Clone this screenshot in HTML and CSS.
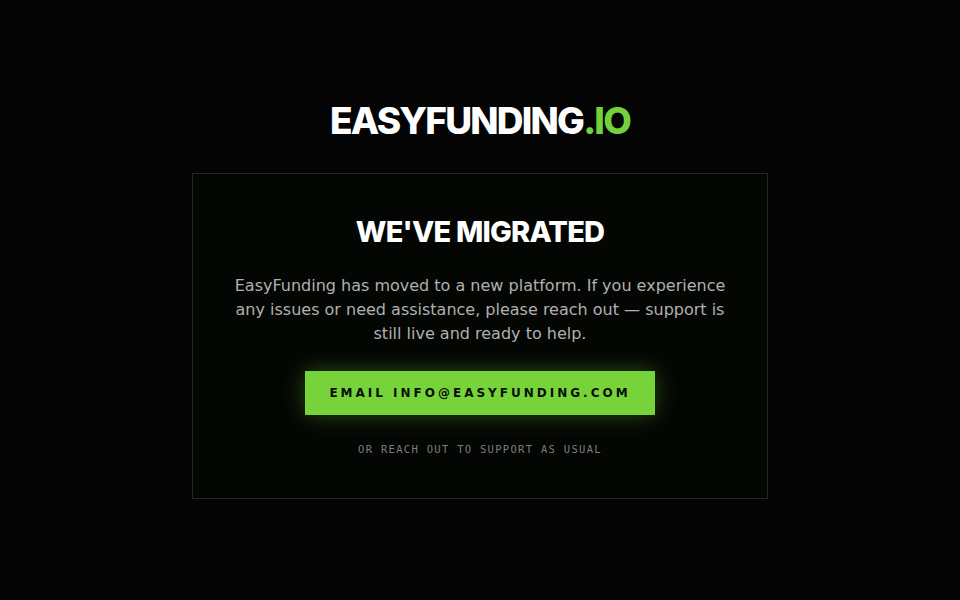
FILE: index.html
```html
<!DOCTYPE html>
<html lang="en">
<head>
<meta charset="utf-8">
<title>EasyFunding.io — We've Migrated</title>
<link rel="stylesheet" href="styles.css">
</head>
<body>
<main class="page">
  <div class="logo">EASYFUNDING<span class="logo-accent">.IO</span></div>
  <section class="card">
    <h1 class="title">WE'VE MIGRATED</h1>
    <p class="message">EasyFunding has moved to a new platform. If you experience any issues or need assistance, please reach out — support is still live and ready to help.</p>
    <a class="button" href="mailto:info@easyfunding.com">EMAIL INFO@EASYFUNDING.COM</a>
    <p class="note">OR REACH OUT TO SUPPORT AS USUAL</p>
  </section>
</main>
</body>
</html>
```
FILE: styles.css
```css
html, body {
  margin: 0;
  padding: 0;
  background: #030403;
}
body {
  font-family: "DejaVu Sans", sans-serif;
}
.page {
  min-height: 600px;
  display: flex;
  flex-direction: column;
  align-items: center;
  justify-content: center;
  box-sizing: border-box;
  padding-bottom: 5px;
}
.logo {
  font-family: Inter, "DejaVu Sans", sans-serif;
  font-weight: 800;
  font-size: 37px;
  line-height: 48px;
  letter-spacing: -1.8px;
  color: #ffffff;
  margin-bottom: 28px;
}
.logo-accent {
  color: #74d13b;
}
.card {
  width: 576px;
  box-sizing: border-box;
  border: 1px solid #1f2c1b;
  background: #040604;
  padding: 40px 40px 41px;
  display: flex;
  flex-direction: column;
  align-items: center;
  text-align: center;
}
.title {
  margin: 0;
  font-family: Inter, "DejaVu Sans", sans-serif;
  font-weight: 800;
  font-size: 29px;
  line-height: 36px;
  letter-spacing: -0.8px;
  color: #ffffff;
}
.message {
  margin: 24px 0 25px;
  max-width: 495px;
  font-size: 16px;
  line-height: 24px;
  color: #b0b0b0;
}
.button {
  display: flex;
  align-items: center;
  justify-content: center;
  width: 350px;
  height: 44px;
  background: #76d33a;
  color: #0a0f06;
  text-decoration: none;
  font-weight: 700;
  font-size: 12px;
  letter-spacing: 3px;
  box-shadow: 0 0 22px rgba(118, 211, 58, 0.35);
}
.note {
  margin: 26px 0 0;
  font-family: "DejaVu Sans Mono", monospace;
  font-size: 10.5px;
  line-height: 16px;
  letter-spacing: 1.3px;
  color: #7d7d7d;
}
```
